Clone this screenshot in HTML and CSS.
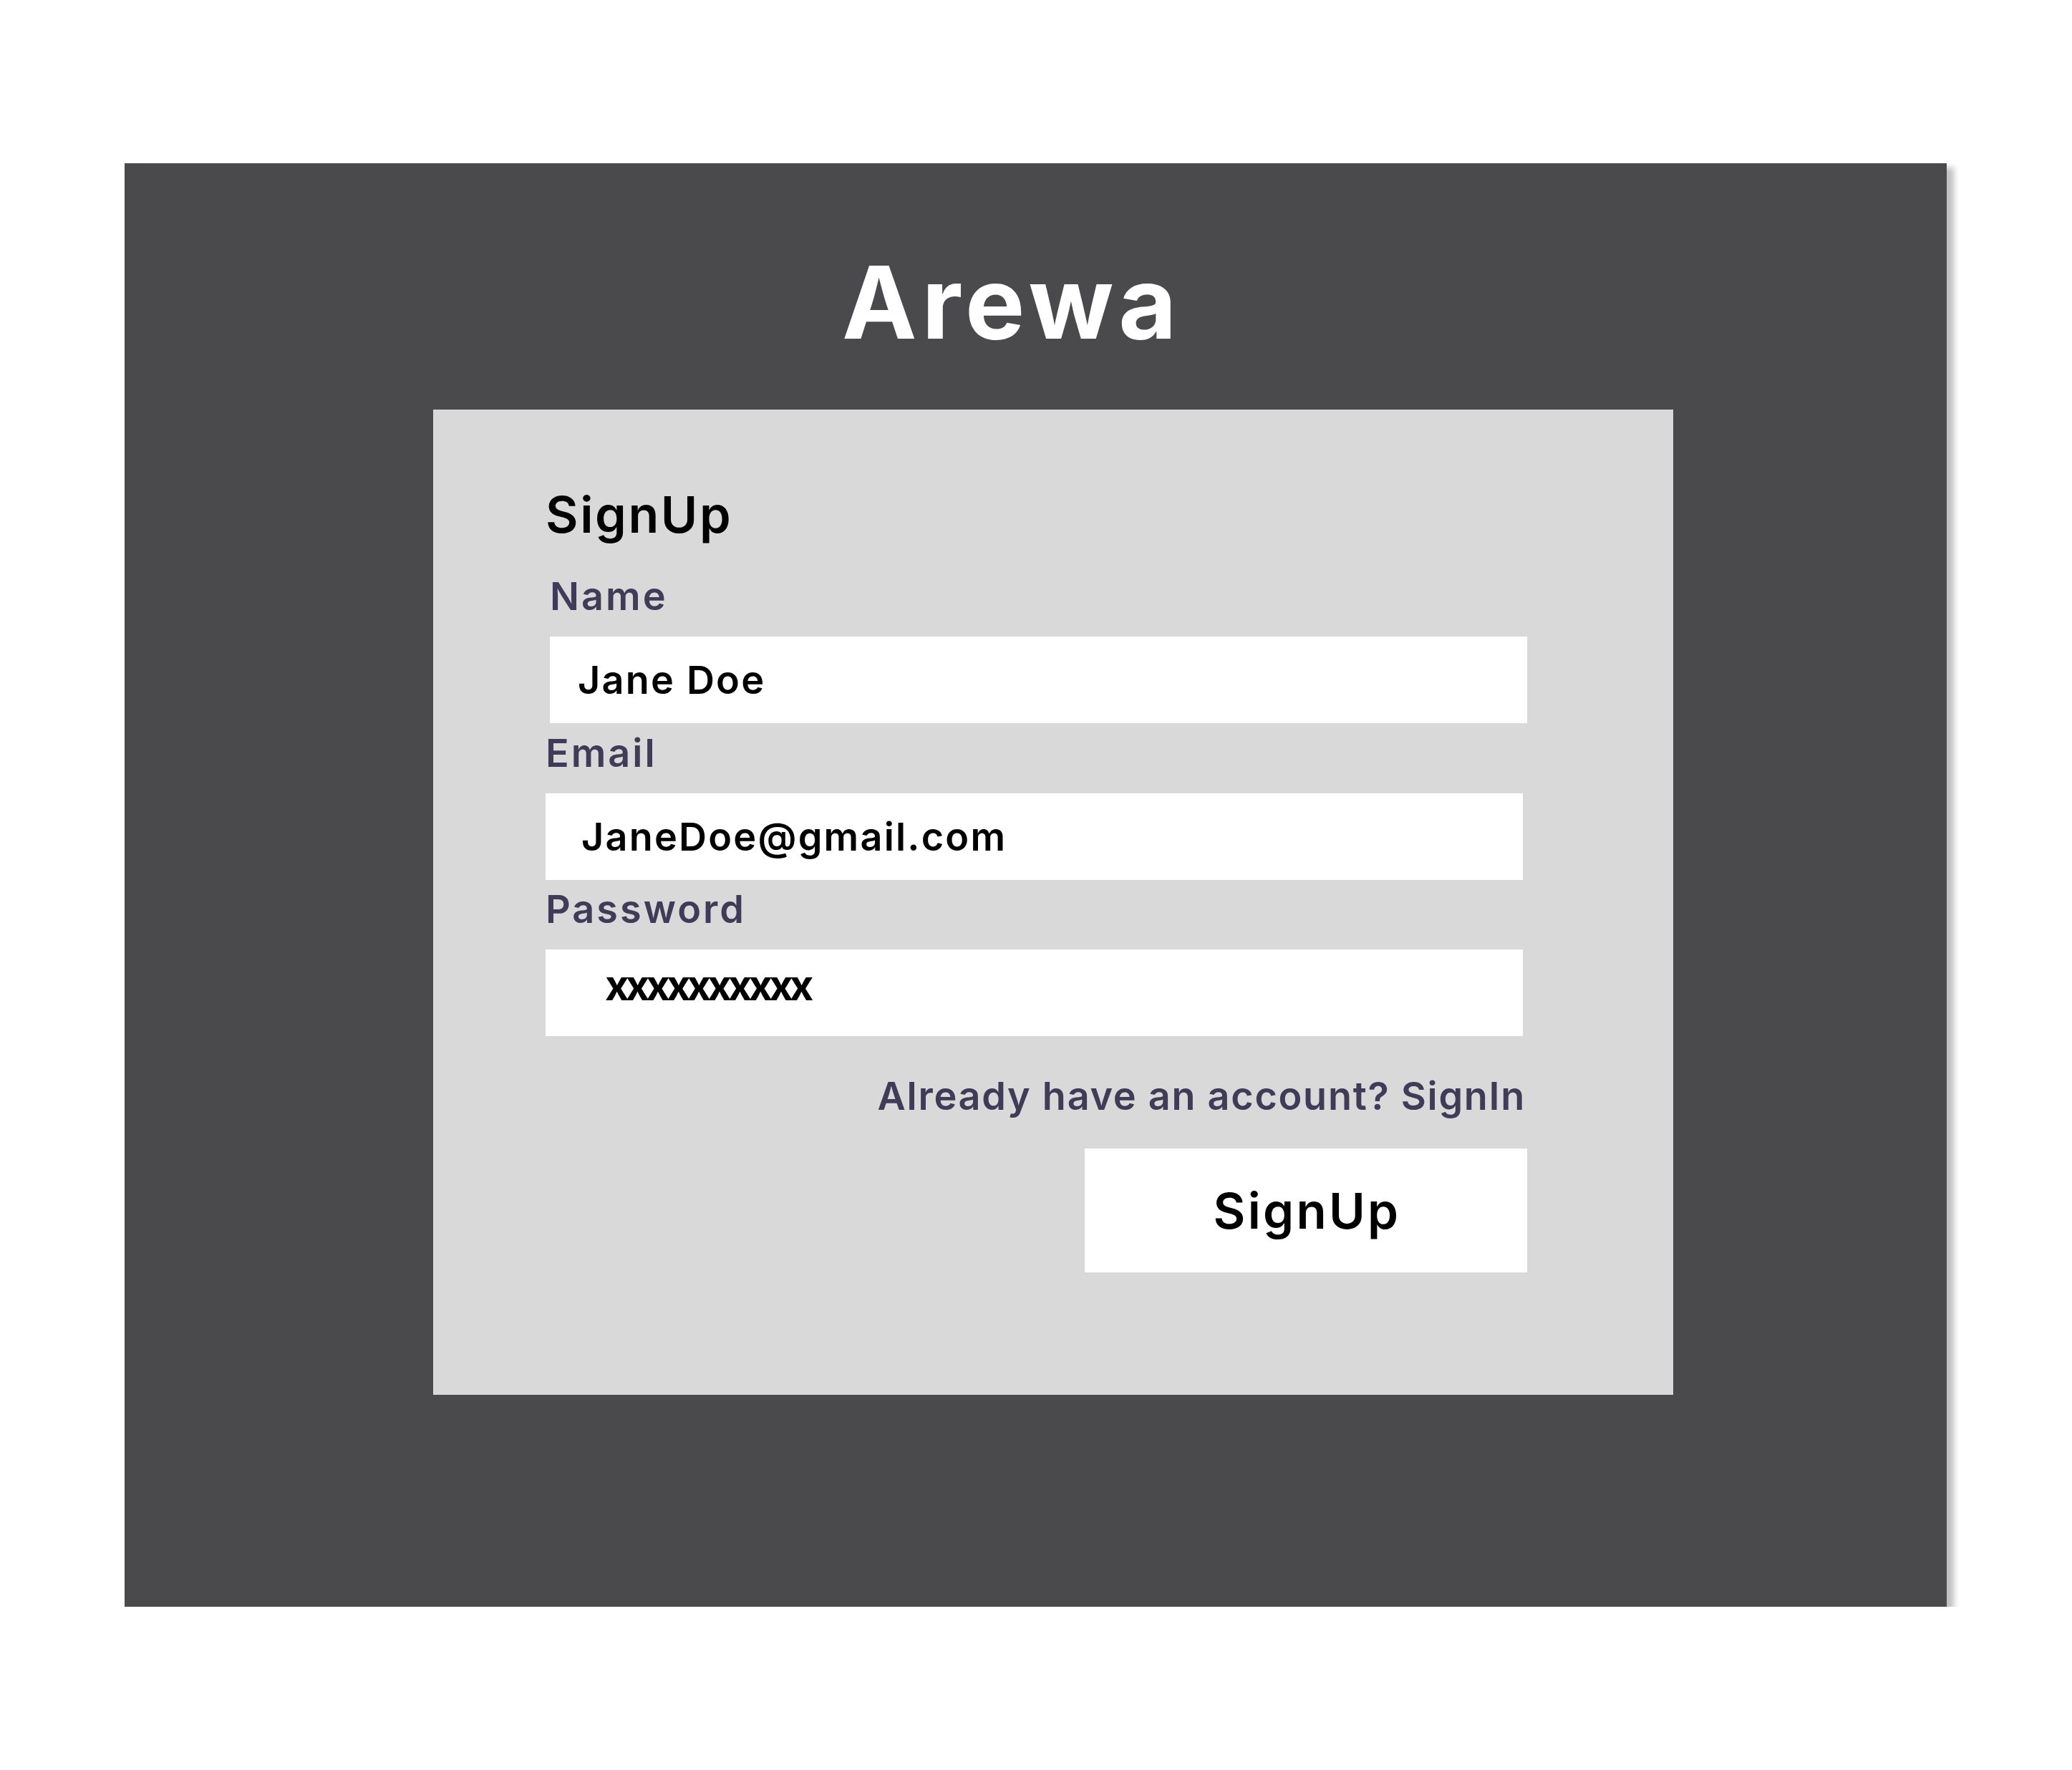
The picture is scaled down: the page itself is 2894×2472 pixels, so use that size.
FILE: index.html
```html
<!DOCTYPE html>
<html lang="en">
<head>
<meta charset="utf-8">
<title>Arewa – SignUp</title>
<link rel="stylesheet" href="styles.css">
</head>
<body>
  <main class="panel">
    <h1 class="brand">Arewa</h1>
    <form class="card">
      <h2 class="card-title">SignUp</h2>

      <label class="field-label field-label--shift" for="name">Name</label>
      <input class="field-input field-input--name" id="name" type="text" value="Jane Doe">

      <label class="field-label" for="email">Email</label>
      <input class="field-input field-input--email" id="email" type="text" value="JaneDoe@gmail.com">

      <label class="field-label" for="password">Password</label>
      <input class="field-input field-input--password" id="password" type="text" value="xxxxxxxxxx">

      <p class="switch-link">Already have an account? SignIn</p>

      <button class="submit" type="button">SignUp</button>
    </form>
  </main>
</body>
</html>
```
FILE: styles.css
```css
html, body {
  margin: 0;
  padding: 0;
  background: #ffffff;
}

body {
  font-family: "Inter", "Liberation Sans", sans-serif;
  padding: 228px 0 0 174px;
}

.panel {
  box-sizing: border-box;
  width: 2545px;
  height: 2016px;
  background: #4a4a4c;
  box-shadow: 10px 6px 8px rgba(0, 0, 0, 0.25);
  padding: 124px 0 0 431px;
  display: flex;
  flex-direction: column;
  align-items: flex-start;
}

.brand {
  margin: 0 0 80px 571px;
  font-size: 140px;
  line-height: 140px;
  font-weight: 700;
  letter-spacing: 7px;
  color: #ffffff;
}

.card {
  box-sizing: border-box;
  width: 1732px;
  height: 1376px;
  margin: 0;
  background: #d9d9d9;
  padding: 112px 210px 0 157px;
  display: flex;
  flex-direction: column;
  align-items: stretch;
}

.card-title {
  margin: 0 0 52px 0;
  font-size: 70px;
  line-height: 70px;
  font-weight: 600;
  letter-spacing: 2.6px;
  color: #000000;
}

.field-label {
  display: block;
  margin: 0 0 29px 0;
  font-size: 54px;
  line-height: 54px;
  font-weight: 600;
  letter-spacing: 3px;
  color: #403c57;
}

.field-label--shift {
  margin-left: 6px;
}

.field-input {
  box-sizing: border-box;
  display: block;
  width: 1365px;
  height: 121px;
  margin: 0 0 15px 0;
  border: 0;
  outline: 0;
  border-radius: 0;
  background: #ffffff;
  font-family: "Inter", "Liberation Sans", sans-serif;
  font-size: 54px;
  font-weight: 600;
  letter-spacing: 2.2px;
  color: #000000;
}

.field-input--name {
  margin-left: 6px;
  padding: 0 0 0 39px;
}

.field-input--email {
  margin-bottom: 14px;
  padding: 0 0 0 50px;
}

.field-input--password {
  padding: 0 0 21px 83px;
  font-size: 58px;
  font-weight: 700;
  letter-spacing: -5px;
}

.switch-link {
  margin: 42px -4px 0 0;
  font-size: 54px;
  line-height: 54px;
  font-weight: 600;
  letter-spacing: 1.7px;
  text-align: right;
  color: #403c57;
}

.submit {
  box-sizing: border-box;
  align-self: flex-end;
  width: 618px;
  height: 173px;
  margin: 46px -6px 0 0;
  padding: 0 0 0 3px;
  border: 0;
  border-radius: 0;
  background: #ffffff;
  font-family: "Inter", "Liberation Sans", sans-serif;
  font-size: 69px;
  font-weight: 600;
  letter-spacing: 3.3px;
  color: #000000;
  cursor: pointer;
}
```
